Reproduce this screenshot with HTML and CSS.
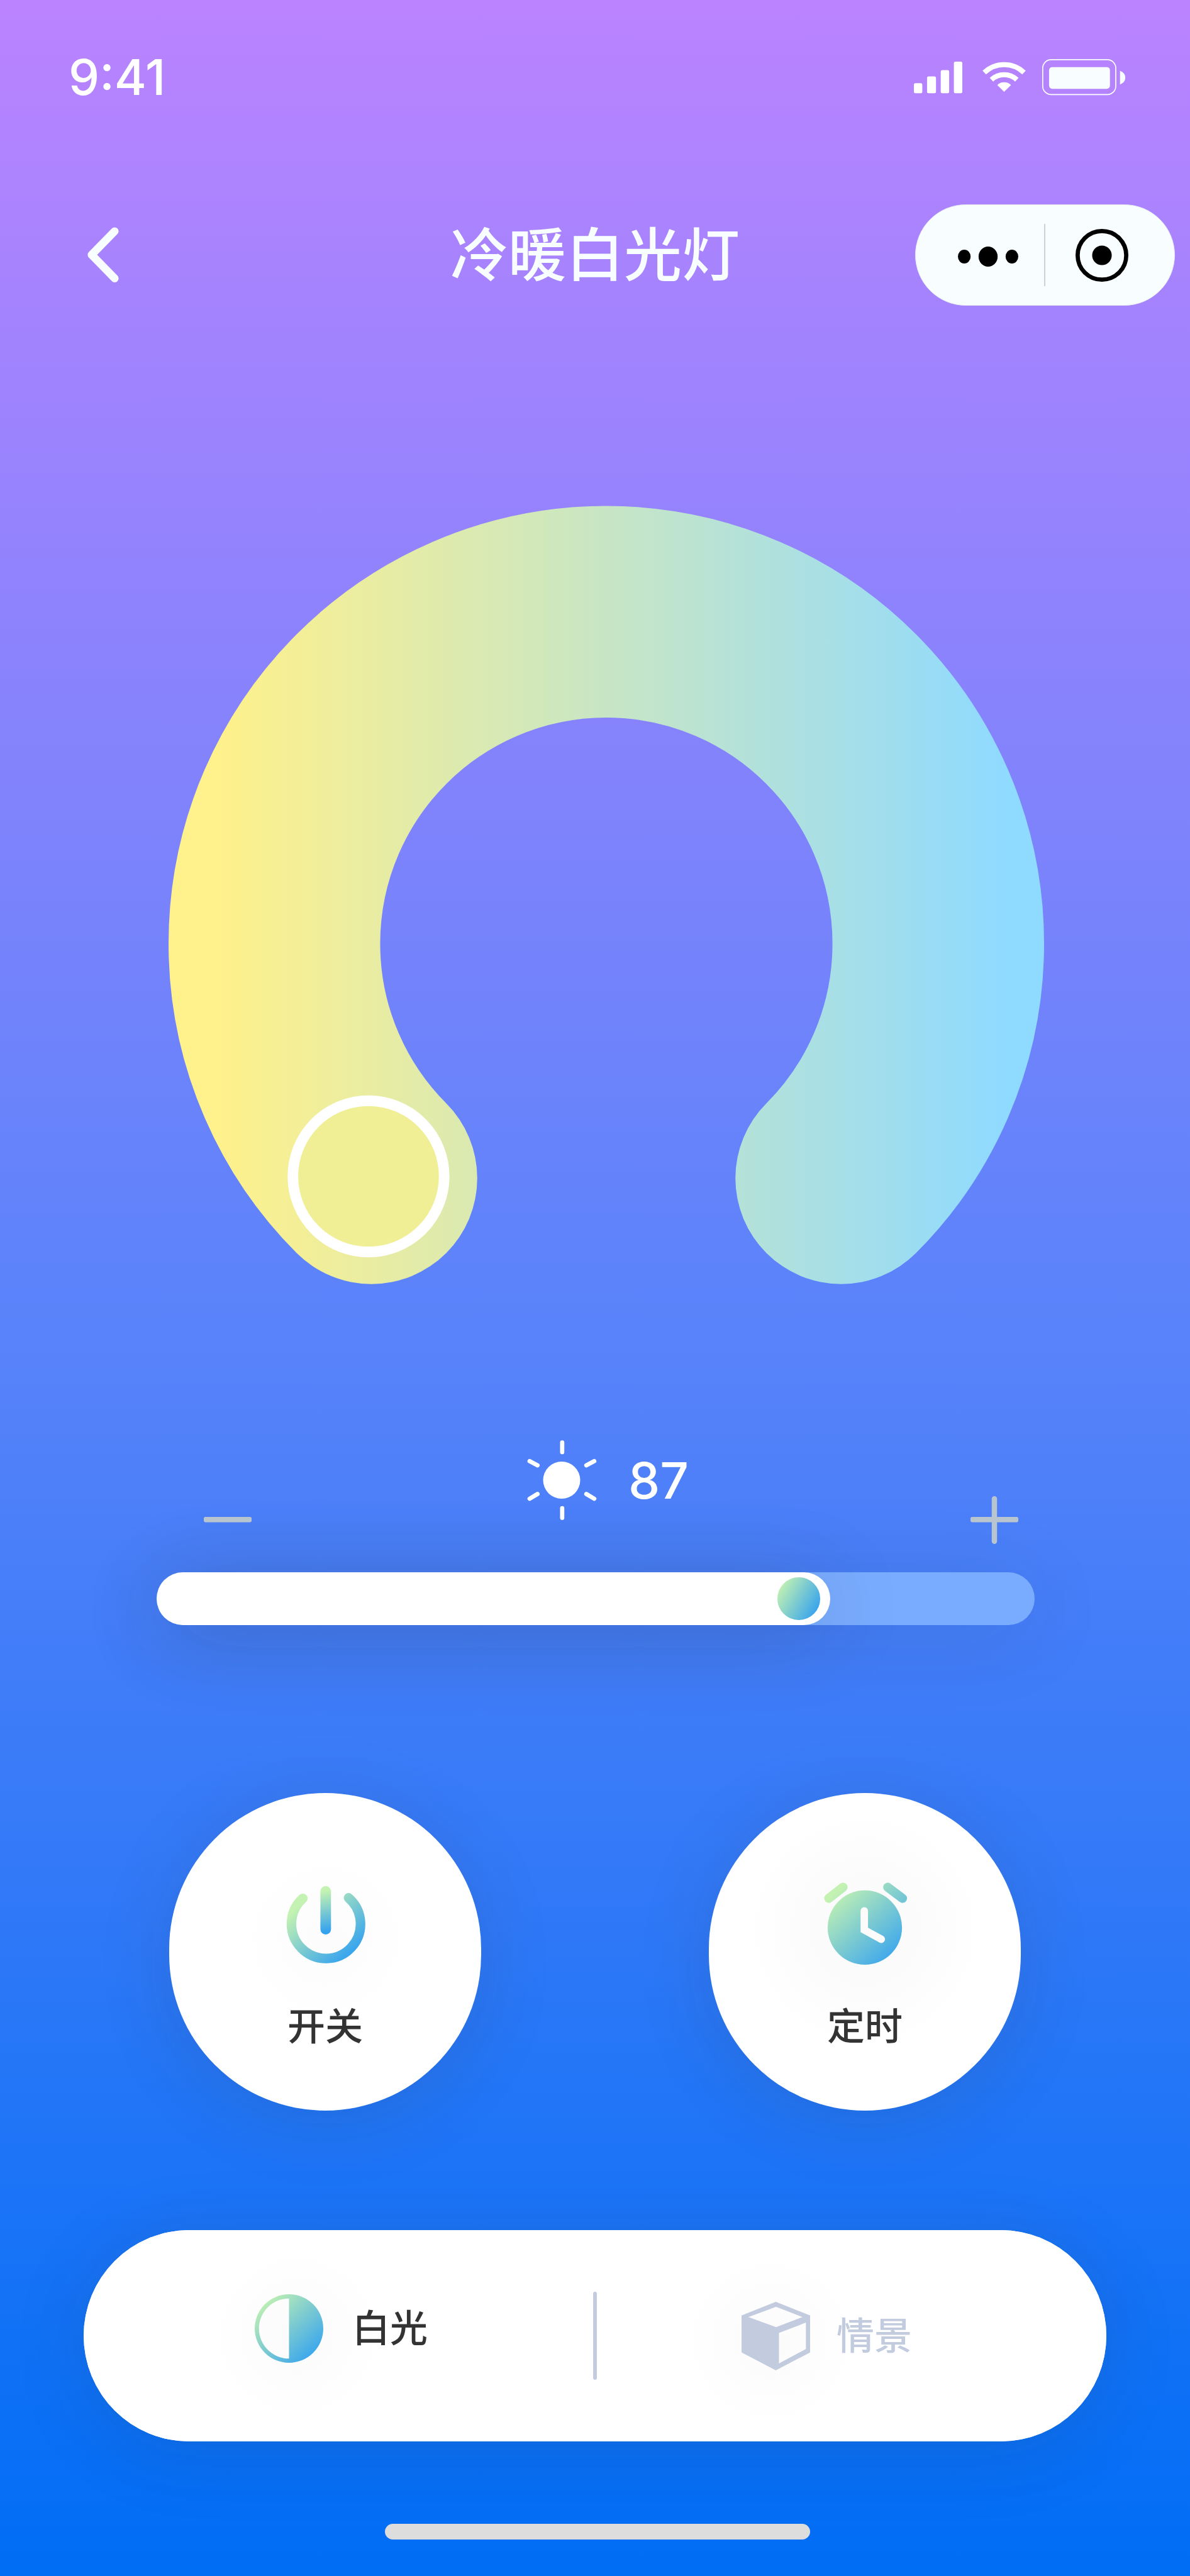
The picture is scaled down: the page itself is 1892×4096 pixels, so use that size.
FILE: index.html
```html
<!DOCTYPE html>
<html lang="zh-CN">
<head>
<meta charset="utf-8">
<meta name="viewport" content="width=device-width, initial-scale=1">
<title>冷暖白光灯</title>
<link rel="stylesheet" href="styles.css">
</head>
<body>
<div class="screen">
  <div class="status">
    <time class="status-time">9:41</time>
    <div class="status-icons">
      <svg class="signal" viewBox="0 0 92 60" aria-hidden="true" fill="#fff">
        <rect x="0" y="41" width="16" height="19" rx="3"/>
        <rect x="25" y="28" width="17" height="32" rx="3"/>
        <rect x="51" y="16" width="16" height="44" rx="3"/>
        <rect x="76" y="0" width="16" height="60" rx="3"/>
      </svg>
      <svg class="wifi" viewBox="0 0 82 56" aria-hidden="true">
        <g fill="none" stroke="#fff" stroke-width="9.500">
          <path d="M3.500 19.500A54 54 0 0 1 78.500 19.500"/>
          <path d="M17 33A35 35 0 0 1 65 33"/>
        </g>
        <path fill="#fff" d="M28 43A19 19 0 0 1 54 43L41 56Z"/>
      </svg>
      <svg class="battery" viewBox="0 0 158 68" aria-hidden="true">
        <rect x="1" y="1" width="138" height="66" rx="16" fill="none" stroke="#fff" stroke-width="2"/>
        <rect x="13" y="15" width="115" height="41" rx="6" fill="#f8fdff"/>
        <path d="M147 22Q157 26 157 35T147 48Z" fill="#f8fdff"/>
      </svg>
    </div>
  </div>

  <header class="header">
    <button class="back" type="button" aria-label="返回">
      <svg viewBox="0 0 60 106" fill="none" stroke="#f8fdff" stroke-width="15" stroke-linecap="round" stroke-linejoin="round" aria-hidden="true"><path d="M52 8L8 53L52 98"/></svg>
    </button>
    <h1 class="title">冷暖白光灯</h1>
    <div class="capsule">
      <button class="capsule-more" type="button" aria-label="更多">
        <svg viewBox="0 0 114 44" aria-hidden="true"><ellipse cx="12" cy="25" rx="12" ry="13"/><ellipse cx="57" cy="25" rx="18" ry="19"/><ellipse cx="102" cy="25" rx="12" ry="13"/></svg>
      </button>
      <button class="capsule-close" type="button" aria-label="关闭">
        <svg viewBox="0 0 100 100" aria-hidden="true"><circle cx="50" cy="50" r="46" fill="none" stroke="#000" stroke-width="8"/><circle cx="50" cy="50" r="18.500"/></svg>
      </button>
    </div>
  </header>

  <main>
    <section class="dial">
      <svg viewBox="0 0 1655 1472" role="slider" tabindex="0" aria-label="色温" aria-valuemin="0" aria-valuemax="100" aria-valuenow="0">
        <defs>
          <linearGradient id="temperature" gradientUnits="userSpaceOnUse" x1="90" y1="0" x2="1580" y2="0">
            <stop offset="0" stop-color="#fff18b"/>
            <stop offset="1" stop-color="#8fdaff"/>
          </linearGradient>
        </defs>
        <path d="M383.500 1271.500A627.500 627.500 0 1 1 1271.500 1271.500" fill="none" stroke="url(#temperature)" stroke-width="400" stroke-linecap="round"/>
        <circle cx="378" cy="1268" r="143" fill="#f0ef95" stroke="#fff" stroke-width="20"/>
      </svg>
    </section>

    <section class="brightness">
      <div class="brightness-head">
        <button class="step" type="button" aria-label="减弱">
          <svg viewBox="0 0 90 90" aria-hidden="true"><rect y="39" width="90" height="10" rx="3"/></svg>
        </button>
        <div class="reading">
          <svg viewBox="0 0 140 158" aria-hidden="true" fill="#fff" stroke="#fff" stroke-width="8" stroke-linecap="round">
            <circle cx="70" cy="79" r="35" stroke="none"/>
            <path d="M71 8V26M71 132V150M9.500 43L24.500 51M131.500 43L116.500 51M9.500 114L24.500 105M131.500 114L116.500 105"/>
          </svg>
          <output for="level">87</output>
        </div>
        <button class="step" type="button" aria-label="增强">
          <svg viewBox="0 0 90 90" aria-hidden="true"><rect y="39" width="90" height="10" rx="3"/><rect x="40" width="10" height="90" rx="5"/></svg>
        </button>
      </div>
      <div class="slider">
        <div class="slider-fill" style="width: 76.7%"></div>
        <input id="level" type="range" min="0" max="100" step="0.1" value="74.6" aria-label="亮度">
      </div>
    </section>

    <section class="actions">
      <button class="action action-power" type="button">
        <svg viewBox="0 0 154 154" fill="none" stroke-linecap="round" aria-hidden="true">
          <defs>
            <linearGradient id="ring" x1="0.100" y1="0.150" x2="0.850" y2="0.900"><stop offset="0" stop-color="#c3f2b2"/><stop offset="1" stop-color="#3aa6ed"/></linearGradient>
            <linearGradient id="stick" gradientUnits="userSpaceOnUse" x1="68" y1="10" x2="80" y2="92"><stop offset="0.080" stop-color="#c3f2b2"/><stop offset="1" stop-color="#34a2ef"/></linearGradient>
          </defs>
          <path d="M35 29A65 65 0 1 0 121 28" stroke="url(#ring)" stroke-width="18"/>
          <path d="M78 16V87" stroke="url(#stick)" stroke-width="20"/>
        </svg>
        <span>开关</span>
      </button>
      <button class="action action-timer" type="button">
        <svg viewBox="0 0 154 154" fill="none" stroke-linecap="round" aria-hidden="true">
          <defs><linearGradient id="clock" gradientUnits="userSpaceOnUse" x1="20" y1="20" x2="130" y2="138"><stop offset="0" stop-color="#c3f2b2"/><stop offset="1" stop-color="#3ea8ec"/></linearGradient></defs>
          <circle cx="77" cy="84" r="70" fill="url(#clock)"/>
          <path d="M9 29L36 8M120 8L148 29" stroke="url(#clock)" stroke-width="17"/>
          <path d="M76 52.500V88.500L108 106" stroke="#fbfbfb" stroke-width="14"/>
        </svg>
        <span>定时</span>
      </button>
    </section>
  </main>

  <nav class="tabs">
    <a class="tab tab-white" href="#white" aria-current="page">
      <svg viewBox="0 0 130 130" aria-hidden="true">
        <defs><linearGradient id="half" x1="0.100" y1="0.100" x2="0.850" y2="0.900"><stop offset="0" stop-color="#c3f2b2"/><stop offset="1" stop-color="#3aa6ed"/></linearGradient></defs>
        <path fill="url(#half)" fill-rule="evenodd" d="M65 0A65 65 0 0 1 65 130A65 65 0 0 1 65 0ZM65 8A57 57 0 0 0 65 122Z"/>
      </svg>
      <span>白光</span>
    </a>
    <span class="tabs-divider"></span>
    <a class="tab tab-scene" href="#scene">
      <svg viewBox="0 0 130 130" aria-hidden="true">
        <path fill="#c3ccdf" fill-rule="evenodd" d="M65 0L130 26V96L65 130L0 96V26ZM65.500 9.500L115.500 29L65.500 48L13 29ZM71 59L122 39.500V89.500L71 117Z"/>
      </svg>
      <span>情景</span>
    </a>
  </nav>

  <div class="home">
    <div class="home-indicator"></div>
  </div>
</div>
</body>
</html>
```
FILE: styles.css
```css
* {
  box-sizing: border-box;
}

body {
  margin: 0;
  font-family: Inter, "Noto Sans CJK SC", sans-serif;
}

button {
  margin: 0;
  padding: 0;
  border: 0;
  background: none;
  color: inherit;
  font: inherit;
  cursor: pointer;
}

svg {
  display: block;
  overflow: visible;
}

.screen {
  min-height: 100vh;
  overflow: hidden;
  background: linear-gradient(#bb83ff, #5a83fa 51%, #006df5);
  color: #fff;
}

/* Status bar */
.status {
  display: flex;
  align-items: center;
  justify-content: space-between;
  height: 246px;
  padding: 0 102px 0 109px;
}

.status-time {
  font-size: 78px;
  font-weight: 500;
  line-height: 80px;
}

.status-icons {
  display: flex;
  align-items: center;
}

.signal {
  width: 77px;
  margin-right: 32px;
}

.wifi {
  width: 69px;
  margin-right: 26px;
}

.battery {
  width: 133px;
}

/* Header */
.header {
  display: grid;
  grid-template-columns: 1fr auto 1fr;
  align-items: center;
  margin-top: 79px;
  padding: 0 24px;
}

.back {
  justify-self: start;
  padding: 24px 24px 24px 115px;
}

.back svg {
  width: 50px;
}

.title {
  margin: 0;
  font-size: 92px;
  font-weight: 500;
  line-height: 120px;
  color: #f8fdff;
}

.capsule {
  display: flex;
  justify-self: end;
  width: 413px;
  height: 161px;
  border: 1px solid #e6eaf0;
  border-radius: 81px;
  background: #f8fdff;
}

.capsule button {
  display: flex;
  flex: 1;
  align-items: center;
  justify-content: center;
}

.capsule-more {
  position: relative;
}

.capsule .capsule-more {
  padding-left: 24px;
}

.capsule-more::after {
  position: absolute;
  top: 30px;
  right: 0;
  bottom: 30px;
  width: 2px;
  background: #cbd3d6;
  content: "";
}

.capsule-more svg {
  width: 96px;
}

.capsule .capsule-close {
  padding-right: 24px;
}

.capsule-close svg {
  width: 84px;
}

/* Colour temperature dial */
.dial {
  margin-top: 318px;
  padding: 0 232px 0 268px;
}

.dial svg {
  width: 100%;
}

/* Brightness */
.brightness {
  margin-top: 245px;
  padding: 0 247px 0 249px;
}

.brightness-head {
  position: relative;
  z-index: 1;
  display: flex;
  align-items: flex-end;
  justify-content: space-between;
  height: 168px;
  padding: 0 26px 0 75px;
}

.step svg {
  width: 76px;
  fill: #b9c5ce;
}

.reading {
  display: flex;
  gap: 47px;
  align-items: center;
  align-self: flex-start;
  padding-right: 14px;
}

.reading svg {
  width: 118px;
}

.reading output {
  font-size: 80px;
  font-weight: 500;
  line-height: 80px;
}

.slider {
  position: relative;
  height: 84px;
  margin-top: 45px;
  border-radius: 42px;
  background: #79acff;
  box-shadow: 0 16px 130px rgba(51, 51, 51, 0.12);
}

.slider-fill {
  position: absolute;
  inset: 0 auto 0 0;
  border-radius: 42px;
  background: #fff;
  box-shadow: 0 16px 130px rgba(51, 51, 51, 0.18);
}

.slider input {
  position: relative;
  display: block;
  width: 100%;
  height: 84px;
  margin: 0;
  appearance: none;
  background: none;
}

.slider input::-webkit-slider-thumb {
  width: 84px;
  height: 84px;
  border: 8px solid #fff;
  border-radius: 50%;
  appearance: none;
  background: linear-gradient(120deg, #c3f2b2 10%, #34a2ef 90%);
}

/* Round actions */
.actions {
  display: flex;
  justify-content: space-between;
  margin-top: 267px;
  padding: 0 269px;
}

.action {
  display: flex;
  flex-direction: column;
  gap: 68px;
  align-items: center;
  width: 496px;
  height: 505px;
  padding-top: 143px;
  border-radius: 252px;
  box-shadow: 0 16px 120px rgba(51, 51, 51, 0.14);
  color: #333;
  font-size: 60px;
  font-weight: 500;
  line-height: 60px;
}

.action svg {
  width: 130px;
}

.action-power {
  background: radial-gradient(circle at 50% 46%, #fcfcfc, #fff 140px);
}

.action-timer {
  background: radial-gradient(circle at 50% 43%, #f9f9f9, #fff 190px);
}

/* Bottom tabs */
.tabs {
  display: grid;
  grid-template-columns: minmax(0, 1fr) 6px minmax(0, 1fr);
  align-items: center;
  height: 336px;
  margin: 190px 133px 0;
  border-radius: 168px;
  background: #fff;
  box-shadow: 0 16px 120px rgba(51, 51, 51, 0.14);
}

.tab {
  display: flex;
  align-items: center;
  height: 100%;
  font-size: 60px;
  font-weight: 500;
  line-height: 60px;
  text-decoration: none;
}

.tab svg {
  width: 109px;
}

.tab-white {
  gap: 46px;
  padding: 0 0 24px 272px;
  border-radius: 168px 0 0 168px;
  background: radial-gradient(circle at 340px 168px, #fbfbfb, #fff 140px);
  color: #333;
}

.tab-scene {
  gap: 42px;
  padding-left: 230px;
  border-radius: 0 168px 168px 0;
  background: radial-gradient(circle at 276px 176px, #fbfbfb, #fff 140px);
  color: #c3ccdf;
}

.tabs-divider {
  height: 140px;
  border-radius: 3px;
  background: #c3ccdf;
}

.home {
  display: flex;
  justify-content: center;
  padding: 131px 0 55px 8px;
}

.home-indicator {
  width: 676px;
  height: 25px;
  border-radius: 13px;
  background: #ddd;
}
```
